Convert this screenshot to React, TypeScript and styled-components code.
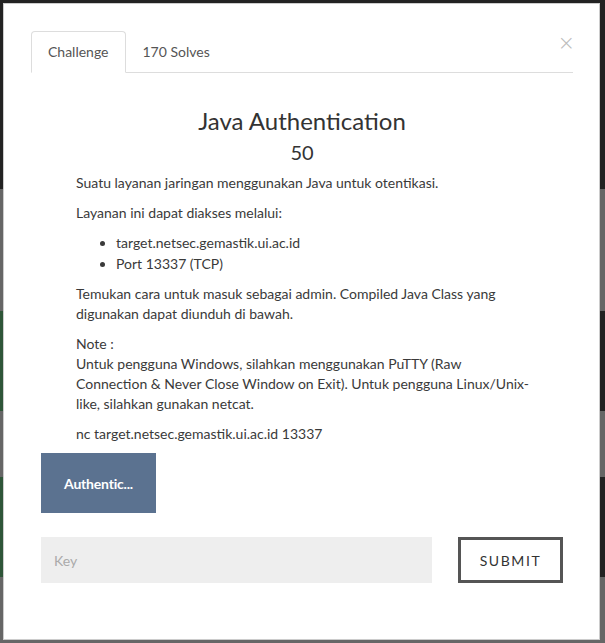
import React from "react";
import styled, { createGlobalStyle } from "styled-components";

const GlobalStyle = createGlobalStyle`
  html, body { margin: 0; padding: 0; }
  body {
    background: #222;
    font-family: Lato, "Open Sans", sans-serif;
    overflow: hidden;
  }
  * { box-sizing: border-box; }
`;

const Backdrop = styled.div`
  display: flex;
  flex-direction: column;
  width: 605px;
  height: 643px;
  background: #222;
`;

const Band = styled.div<{ $h: number; $left: string; $right: string }>`
  display: flex;
  height: ${(p) => p.$h}px;
  flex: ${(p) => (p.$h === 0 ? 1 : "none")};
  background: ${(p) => p.$right};
  & > span {
    width: 50%;
    background: ${(p) => p.$left};
  }
`;

const Modal = styled.div`
  position: fixed;
  top: 3px;
  left: 3px;
  width: 597px;
  height: 637px;
  background: #fff;
  border: 1px solid rgba(0, 0, 0, 0.2);
  padding: 27px 26px 0 27px;
  display: flex;
  flex-direction: column;
  color: #333;
`;

const TabBar = styled.div`
  display: flex;
  align-items: flex-end;
  height: 42px;
  border-bottom: 1px solid #ddd;
`;

const Tab = styled.div<{ $active?: boolean }>`
  height: ${(p) => (p.$active ? "42px" : "41px")};
  line-height: 40px;
  padding: 0 16px;
  font-size: 14px;
  color: #555;
  margin-bottom: ${(p) => (p.$active ? "-1px" : "0")};
  border: 1px solid ${(p) => (p.$active ? "#ddd" : "transparent")};
  border-bottom-color: ${(p) => (p.$active ? "#fff" : "transparent")};
  border-radius: 4px 4px 0 0;
  background: ${(p) => (p.$active ? "#fff" : "transparent")};
`;

const Close = styled.div`
  margin-left: auto;
  margin-right: -2px;
  align-self: flex-start;
  margin-top: 2px;
  font-size: 21px;
  line-height: 20px;
  color: #bbb;
  font-family: "DejaVu Sans", sans-serif;
  font-weight: 300;
`;

const Title = styled.h1`
  margin: 33px 0 0;
  text-align: center;
  font-size: 24px;
  line-height: 30px;
  font-weight: 400;
  color: #333;
`;

const Points = styled.div`
  margin-top: 4px;
  text-align: center;
  font-size: 20px;
  line-height: 24px;
  color: #333;
`;

const Content = styled.div`
  margin-top: 9px;
  padding: 0 38px 0 45px;
  font-size: 14px;
  line-height: 20px;
  color: #3a3a3a;

  p {
    margin: 0 0 10px;
  }
  ul {
    margin: 0 0 10px;
    padding-left: 40px;
    line-height: 20.5px;
  }
`;

const FileRow = styled.div`
  padding: 0 10px;
  margin-top: -1px;
`;

const FileButton = styled.div`
  width: 115px;
  height: 60px;
  background: #5b7290;
  color: #fff;
  font-weight: 700;
  font-size: 14px;
  display: flex;
  align-items: center;
  justify-content: center;
  letter-spacing: -0.2px;
`;

const FormRow = styled.div`
  display: flex;
  gap: 26px;
  padding: 0 10px;
  margin-top: 24px;
`;

const KeyInput = styled.input`
  width: 391px;
  height: 46px;
  border: none;
  background: #eee;
  padding: 0 13px;
  font-family: Lato, sans-serif;
  font-size: 14px;
  color: #333;
  outline: none;
  &::placeholder {
    color: #aaa;
  }
`;

const SubmitButton = styled.button`
  width: 105px;
  height: 46px;
  border: 3px solid #555;
  background: #fff;
  font-family: Lato, sans-serif;
  font-size: 14px;
  font-weight: 400;
  letter-spacing: 1.6px;
  color: #333;
  padding: 0;
`;

export default function App() {
  return (
    <>
      <GlobalStyle />
      <Backdrop>
        <Band $h={189} $left="#222" $right="#222"><span /></Band>
        <Band $h={122} $left="#666" $right="#666"><span /></Band>
        <Band $h={100} $left="#2e5538" $right="#222"><span /></Band>
        <Band $h={66} $left="#666" $right="#666"><span /></Band>
        <Band $h={100} $left="#2e5538" $right="#222"><span /></Band>
        <Band $h={0} $left="#666" $right="#666"><span /></Band>
      </Backdrop>
      <Modal>
        <TabBar>
          <Tab $active>Challenge</Tab>
          <Tab>170 Solves</Tab>
          <Close>×</Close>
        </TabBar>
        <Title>Java Authentication</Title>
        <Points>50</Points>
        <Content>
          <p>Suatu layanan jaringan menggunakan Java untuk otentikasi.</p>
          <p>Layanan ini dapat diakses melalui:</p>
          <ul>
            <li>target.netsec.gemastik.ui.ac.id</li>
            <li>Port 13337 (TCP)</li>
          </ul>
          <p>
            Temukan cara untuk masuk sebagai admin. Compiled Java Class yang
            digunakan dapat diunduh di bawah.
          </p>
          <p>
            Note :<br />
            Untuk pengguna Windows, silahkan menggunakan PuTTY (Raw Connection
            &amp; Never Close Window on Exit). Untuk pengguna Linux/Unix-like,
            silahkan gunakan netcat.
          </p>
          <p>nc target.netsec.gemastik.ui.ac.id 13337</p>
        </Content>
        <FileRow>
          <FileButton>Authentic...</FileButton>
        </FileRow>
        <FormRow>
          <KeyInput placeholder="Key" />
          <SubmitButton>SUBMIT</SubmitButton>
        </FormRow>
      </Modal>
    </>
  );
}
